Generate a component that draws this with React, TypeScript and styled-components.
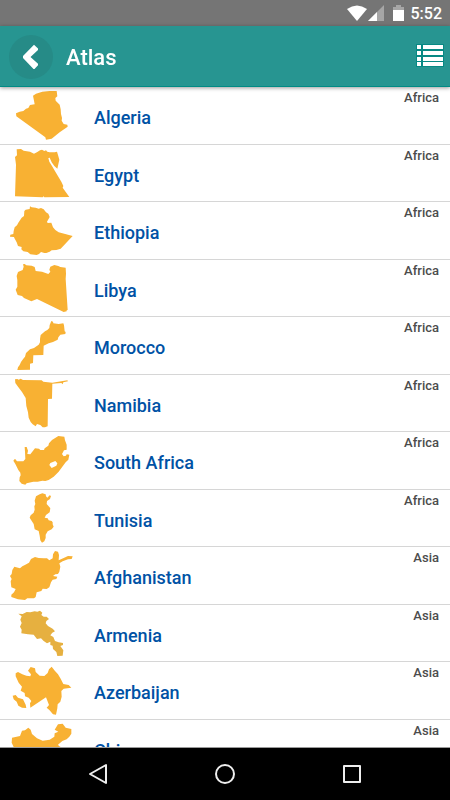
import React from "react";
import styled, { createGlobalStyle } from "styled-components";

const GlobalStyle = createGlobalStyle`
  * { box-sizing: border-box; }
  body { margin: 0; background: #fff; }
  button { border: 0; padding: 0; background: none; font: inherit; cursor: pointer; }
  svg { display: block; }
`;

const Screen = styled.div`
  display: flex;
  flex-direction: column;
  height: 100vh;
  font-family: Roboto, "Noto Sans", sans-serif;
  overflow: hidden;
`;

const StatusBar = styled.div`
  flex: none;
  display: flex;
  align-items: center;
  justify-content: flex-end;
  height: 26px;
  padding: 2px 8px 0 0;
  background: #757575;
  color: #fff;
  font-size: 16px;
  font-weight: 500;
  line-height: 24px;
`;

const StatusIcons = styled.svg`
  margin-right: 7px;
`;

const AppBar = styled.header`
  flex: none;
  position: relative;
  display: flex;
  align-items: center;
  height: 61px;
  padding: 2px 6px 0 9px;
  background: #279591;
  border-bottom: 1px solid #008b85;
  box-shadow: 0 1px 4px rgba(0, 0, 0, 0.4);
`;

const BackButton = styled.button`
  display: grid;
  place-items: center;
  width: 44px;
  height: 44px;
  border-radius: 50%;
  background: #268b87;
`;

const Title = styled.h1`
  flex: 1;
  margin: 2px 0 0 13px;
  color: #fff;
  font-size: 22px;
  font-weight: 500;
  line-height: 28px;
`;

const MenuButton = styled.button`
  display: block;
`;

const CountryList = styled.ul`
  flex: 1;
  min-height: 0;
  margin: 0;
  padding: 0;
  list-style: none;
  overflow-y: auto;
  scrollbar-width: none;
  background: #fff;
`;

const CountryItem = styled.li`
  height: 57px;
  border-bottom: 1px solid #d6d6d6;

  &:nth-child(odd) { height: 58px; }
`;

const CountryLink = styled.a`
  display: flex;
  height: 100%;
  padding-right: 11px;
  text-decoration: none;
`;

const Shape = styled.svg<{ $muted?: boolean }>`
  flex: none;
  width: 90px;
  height: 57px;
  fill: ${(p) => (p.$muted ? "#e6b040" : "#f8b133")};
`;

const CountryName = styled.span`
  flex: 1;
  padding: 19px 0 0 4px;
  color: #0052a5;
  font-size: 18px;
  font-weight: 500;
  line-height: 24px;
`;

const Continent = styled.span`
  padding-top: 2px;
  color: #4c4c4c;
  font-size: 13px;
  font-weight: 500;
  line-height: 17px;
`;

const NavBar = styled.nav`
  flex: none;
  display: flex;
  align-items: center;
  justify-content: center;
  gap: 99px;
  height: 53px;
  border-top: 1px solid #9a9a9a;
  background: #000;
`;

const NavButton = styled.button`
  display: grid;
  place-items: center;
  width: 28px;
  height: 28px;
`;

type Country = {
  name: string;
  continent: string;
  top: number;
  path: string;
  muted?: boolean;
};

const countries: Country[] = [
  {
    name: "Algeria",
    continent: "Africa",
    top: 3,
    path: "M99 29L108 23L127 17L149 15L170 15L172 31L166 36L167 44L179 56L182 70L183 84L186 96L185 104L191 114L202 116L203 122L179 139L155 158L138 161L136 154L49 91L48 82L59 77L70 75L78 68L85 66L90 57L104 55L101 39Z",
  },
  {
    name: "Egypt",
    continent: "Africa",
    top: 177,
    path: "M50 190L63 189L71 194L90 197L102 203L112 198L120 193L126 191L133 195L138 193L142 197L149 199L164 199L171 197L174 207L178 221L172 248L163 240L155 229L149 215L145 216L148 227L156 240L167 259L184 287L190 300L188 305L208 333L133 334L131 331L128 334L45 331L48 236L45 213L51 208Z",
  },
  {
    name: "Ethiopia",
    continent: "Africa",
    top: 0,
    path: "M90 13L95 16L107 17L116 20L123 18L131 22L138 31L145 35L149 45L141 59L143 63L154 62L159 76L166 84L176 91L218 102L182 140L169 144L155 145L149 149L139 153L133 153L123 150L117 156L110 159L91 157L83 150L70 148L64 142L65 135L54 132L50 121L43 108L42 105L30 104L31 98L40 96L41 87L44 76L51 70L55 62L65 47L72 42L73 27L77 23L89 21Z",
  },
  {
    name: "Libya",
    continent: "Africa",
    top: 174,
    path: "M69 187L74 186L79 190L95 191L104 195L107 207L126 209L145 216L151 209L148 203L151 194L163 189L175 192L181 195L197 197L198 215L197 231L203 324L200 325L200 328L191 330L111 291L94 298L72 288L66 282L53 279L47 263L52 254L52 234L50 222L54 210L68 204L71 194Z",
  },
  {
    name: "Morocco",
    continent: "Africa",
    top: 0,
    path: "M154 12L159 14L160 19L176 21L190 19L192 25L194 43L197 45L196 51L181 53L175 61L173 68L159 75L146 79L131 86L130 114L100 115L99 138L90 140L90 158L52 159L54 151L59 144L63 135L70 125L75 119L78 108L90 97L102 93L116 83L120 76L120 66L122 54L135 43L142 39L148 33L149 24Z",
  },
  {
    name: "Namibia",
    continent: "Africa",
    top: 174,
    path: "M45 187L52 186L56 188L62 185L69 189L125 190L130 194L157 197L184 193L202 190L204 193L190 196L188 202L184 198L157 200L156 245L144 246L143 328L135 331L128 331L121 324L111 321L107 328L98 322L92 315L86 302L84 286L79 267L77 243L66 225L53 208L46 198Z",
  },
  {
    name: "South Africa",
    continent: "Africa",
    top: 0,
    path: "M175 12L193 14L195 25L200 38L200 53L192 55L186 66L191 73L198 71L200 67L208 68L205 83L197 91L187 104L176 119L161 134L146 144L136 147L127 146L113 149L100 149L80 154L76 158L65 155L58 147L59 136L62 130L61 122L55 114L46 96L40 86L45 80L51 88L70 88L76 81L75 59L74 45L80 45L84 56L82 66L91 67L105 49L117 50L121 54L132 54L134 49L145 41L147 34L156 24ZM166 87L151 93L148 99L155 108L169 101L172 94Z",
  },
  {
    name: "Tunisia",
    continent: "Africa",
    top: 174,
    path: "M127 184L137 187L138 193L142 197L149 190L153 192L150 201L141 207L140 216L146 223L151 229L149 241L138 249L134 257L143 259L146 265L155 267L158 271V277L161 284L155 292L143 298L137 308L137 318L133 328L126 332L121 325L119 311L116 297L104 292L101 276L89 257L92 250L101 242L104 233L103 223L106 216L104 206L108 193L119 187Z",
  },
  {
    name: "Afghanistan",
    continent: "Asia",
    top: 3,
    path: "M165 15L174 17L177 27L176 43L196 34L204 30L218 31L215 39L204 40L188 46L178 52L181 62L178 77L174 84L166 85L159 90L172 92L169 99L158 101L153 109L148 124L140 129L128 128L124 135L110 139L107 153L102 157L82 157L75 162L54 160L34 153V146L42 139L47 129L34 124L32 106L35 99L30 90L35 84L37 72L43 62L60 67L67 61L76 56L87 50L93 39L105 33L116 36L132 37L141 37L148 43L158 37L159 25Z",
  },
  {
    name: "Armenia",
    continent: "Asia",
    top: 177,
    path: "M55 203L68 204L80 198L91 199L104 196L112 197L120 194L127 200L124 207L131 212L140 212L147 219L139 225L137 232L144 240L158 248L165 256L157 260L151 268L160 273L165 285L176 289L189 291V297L181 300L190 313L188 329L172 330L169 318L159 309L158 299L151 297L151 287L141 292L131 285L123 277L111 279L101 266L84 265L64 262L65 251L60 242L65 231L61 221L65 211Z",
    muted: true,
  },
  {
    name: "Azerbaijan",
    continent: "Asia",
    top: 6,
    path: "M92 21L105 25L107 36L119 47L133 48L143 39L147 28L155 20L165 33L174 43L182 56L190 72L206 75L214 83L191 86L184 93L185 110L181 125L173 133L172 145L168 164L159 163L148 150L140 143L147 135L138 112L91 143L90 130L94 123L86 113L75 109L74 99L62 92L66 80L56 68L47 49V40L54 36L67 43L79 47L91 49L93 43L84 32ZM38 107L47 105L54 113L69 118L77 134L79 144L66 143L55 137L50 125L41 118Z",
  },
  {
    name: "China",
    continent: "Asia",
    top: 180,
    path: "M85 203L92 209L96 222L111 235L128 242L149 239L163 230L164 220L175 215L164 209L174 193L188 191L197 203L214 207L214 221L208 230L200 238L187 243L174 254L177 258L186 263L180 275L188 290L180 312L160 325L132 331L114 319L88 317L56 300L47 274L35 248L36 233L60 228L66 212L75 211Z",
  },
];

export default function App() {
  return (
    <>
      <GlobalStyle />
      <Screen>
        <StatusBar>
          <StatusIcons width="57" height="18" viewBox="0 0 57 18" aria-hidden="true">
            <path d="M0 4Q10 -3 20 4L10 16Z" fill="#fff" />
            <path d="M37 0V16H21Z" fill="#a6a6a6" />
            <path d="M30 7V16H21Z" fill="#fff" />
            <path d="M49 0H54V2H57V5H46V2H49Z" fill="#a6a6a6" />
            <path d="M46 5H57V16H46Z" fill="#fff" />
          </StatusIcons>
          <span>5:52</span>
        </StatusBar>
        <AppBar>
          <BackButton aria-label="Back">
            <svg width="16" height="26" viewBox="0 0 16 26" aria-hidden="true">
              <path d="M11 0.800L15 4.500V6L7.500 13L15 19.800V21.200L11.500 25H10.500L0 14V12Z" fill="#fff" />
            </svg>
          </BackButton>
          <Title>Atlas</Title>
          <MenuButton aria-label="Show list">
            <svg width="28" height="26" viewBox="0 0 28 26" aria-hidden="true">
              <path d="M0 0H28V23H0Z" fill="#078984" />
              <path
                d="M1 1H5V5H1ZM1 7H5V11H1ZM1 13H5V17H1ZM1 18H5V22H1ZM7 1H27V5H7ZM7 7H27V11H7ZM7 13H27V17H7ZM7 18H27V22H7Z"
                fill="#fff"
              />
            </svg>
          </MenuButton>
        </AppBar>
        <CountryList>
          {countries.map((c) => (
            <CountryItem key={c.name}>
              <CountryLink href={`#${c.name.toLowerCase().replace(" ", "-")}`}>
                <Shape viewBox={`0 ${c.top} 270 171`} $muted={c.muted} aria-hidden="true">
                  <path d={c.path} fillRule="evenodd" />
                </Shape>
                <CountryName>{c.name}</CountryName>
                <Continent>{c.continent}</Continent>
              </CountryLink>
            </CountryItem>
          ))}
        </CountryList>
        <NavBar>
          <NavButton aria-label="System back">
            <svg width="20" height="22" viewBox="0 0 20 22" fill="none" stroke="#eee" strokeWidth="2" strokeLinejoin="round">
              <path d="M18 2V20L2 11Z" />
            </svg>
          </NavButton>
          <NavButton aria-label="Home">
            <svg width="22" height="22" viewBox="0 0 22 22" fill="none" stroke="#eee" strokeWidth="2">
              <circle cx="11" cy="11" r="9" />
            </svg>
          </NavButton>
          <NavButton aria-label="Recent apps">
            <svg width="20" height="20" viewBox="0 0 20 20" fill="none" stroke="#eee" strokeWidth="2" strokeLinejoin="round">
              <path d="M2 2H18V18H2Z" />
            </svg>
          </NavButton>
        </NavBar>
      </Screen>
    </>
  );
}
